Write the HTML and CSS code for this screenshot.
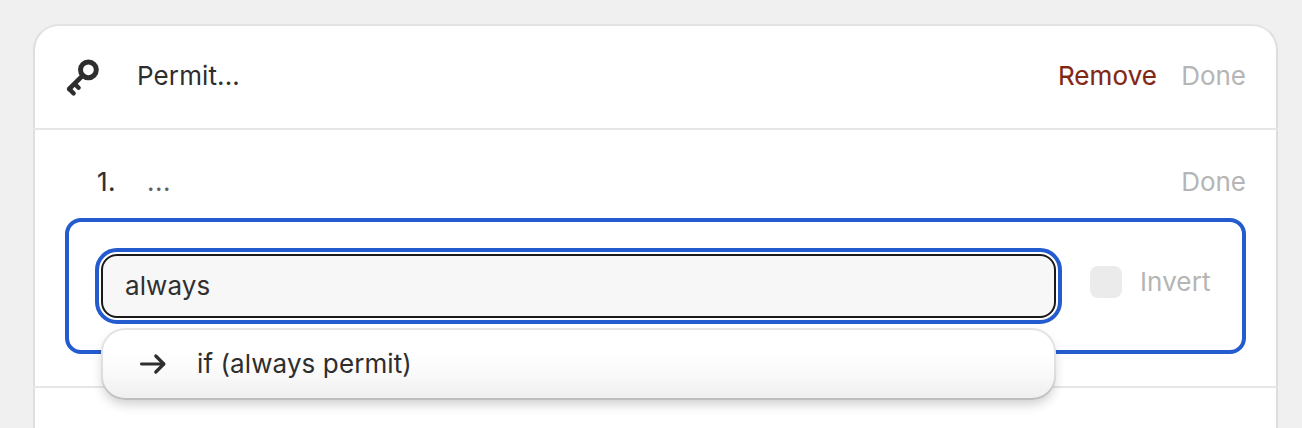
FILE: index.html
```html
<!DOCTYPE html>
<html lang="en">
<head>
<meta charset="utf-8">
<title>Permit</title>
<link rel="stylesheet" href="styles.css">
</head>
<body>
<main class="card">
  <header class="card-header">
    <svg class="key-icon" width="36" height="40" viewBox="0 0 36 40" fill="none" stroke="#2e2e2e" stroke-width="4.6">
      <circle cx="23.4" cy="11.8" r="7.9" stroke-width="5"/>
      <path d="M17.6 17.6 L4.2 31" stroke-linecap="round"/>
      <path d="M4.2 31 L8.6 35.4 M9.8 26 L13.6 29.8" stroke-width="4.4" stroke-linecap="round"/>
    </svg>
    <h1 class="title">Permit...</h1>
    <div class="actions">
      <button class="link remove">Remove</button>
      <button class="link" disabled>Done</button>
    </div>
  </header>
  <section class="rule">
    <div class="rule-header">
      <span class="number">1.</span>
      <span class="summary">...</span>
      <button class="link" disabled>Done</button>
    </div>
    <div class="editor">
      <div class="combo">
        <input class="field" type="text" value="always" aria-label="Condition">
        <div class="menu">
          <svg class="arrow-icon" width="28" height="24" viewBox="0 0 28 24" fill="none" stroke="#2e2e2e" stroke-width="2.9" stroke-linecap="round" stroke-linejoin="round">
            <path d="M2.4 12 H24.8"/>
            <path stroke-width="3.2" d="M16.8 4 L24.8 12 L16.8 20"/>
          </svg>
          <span class="option">if (always permit)</span>
        </div>
      </div>
      <div class="invert"><span class="checkbox"></span><span class="invert-label">Invert</span></div>
    </div>
  </section>
</main>
</body>
</html>
```
FILE: styles.css
```css
* { box-sizing: border-box; }
body {
  margin: 0;
  height: 428px;
  overflow: hidden;
  padding: 24px 24px 0 33px;
  background: #f0f0f0;
  color: #2e2e2e;
  font: 400 26px/32px Inter, "Liberation Sans", sans-serif;
}
.card {
  height: 404px;
  border: 2px solid #dedede;
  border-top-color: #e3e3e3;
  border-bottom: 0;
  border-radius: 26px 26px 0 0;
  background: #fff;
}
.card-header {
  display: flex;
  align-items: center;
  height: 104px;
  margin: 0 -2px;
  padding: 0 32px 2px;
  border-bottom: 2px solid #e6e6e6;
}
.key-icon { display: block; margin: 3px 0 0; }
.title { margin: 0 0 0 36px; font: inherit; letter-spacing: .12px; }
.actions { display: flex; gap: 24px; margin-left: auto; }
.link {
  padding: 0;
  border: 0;
  background: none;
  color: #b5b5b5;
  font: inherit;
}
.link.remove { color: #822615; letter-spacing: .1px; -webkit-text-stroke: .15px; }
.rule {
  height: 258px;
  margin: 0 -2px;
  padding: 36px 32px 0;
  border-bottom: 2px solid #e6e6e6;
}
.rule-header { display: flex; height: 52px; padding-left: 32px; }
.rule-header .link { height: 32px; margin-left: auto; }
.number { width: 50px; letter-spacing: .4px; -webkit-text-stroke: .15px; }
.summary { color: #616161; letter-spacing: .5px; }
.editor {
  display: flex;
  height: 136px;
  padding: 32px 0 0 32px;
  border: 4px solid #245bcf;
  border-radius: 16px;
}
.combo { position: relative; flex: none; width: 955px; height: 64px; }
.field {
  display: block;
  width: 100%;
  height: 64px;
  padding: 0 22px 2px;
  border: 2px solid #1a1a1a;
  border-radius: 16px;
  outline: 4px solid #245bcf;
  outline-offset: 2px;
  background: #f7f7f7;
  color: #303030;
  font: inherit;
  letter-spacing: .1px;
}
.menu {
  position: absolute;
  top: 74px;
  left: 0;
  display: flex;
  align-items: center;
  width: 955px;
  height: 72px;
  padding: 0 38px;
  border-radius: 24px;
  background: linear-gradient(#fff 35%, #f9f9f9 65%, #eee);
  box-shadow: inset 0 0 0 2px rgba(0, 0, 0, .11), inset 0 -2px 0 rgba(0, 0, 0, .1), 0 6px 12px -2px rgba(0, 0, 0, .2);
}
.option { margin-left: 30px; letter-spacing: .1px; }
.invert { display: flex; flex: none; gap: 18px; height: 32px; margin: 12px 0 0 34px; }
.checkbox { width: 32px; height: 32px; border-radius: 8px; background: #ebebeb; }
.invert-label { color: #b5b5b5; letter-spacing: .1px; }
```
